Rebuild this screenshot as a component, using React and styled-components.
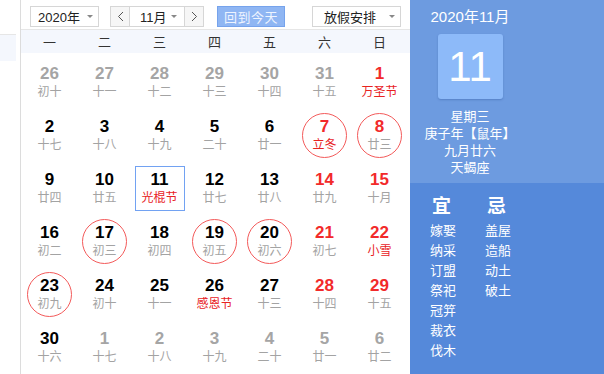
import styled, { createGlobalStyle } from "styled-components"

const GlobalStyle = createGlobalStyle`
    html, body {
        margin: 0;
        padding: 0;
        background: #fff;
    }
    body {
        font-family: "Liberation Sans", Arial, "Noto Sans CJK SC", sans-serif;
    }
`

const weekDays = ["一", "二", "三", "四", "五", "六", "日"]

// tone: d = normal, r = red (weekend), m = other month
const weeks = [
    [
        { n: 26, l: "初十", t: "m" },
        { n: 27, l: "十一", t: "m" },
        { n: 28, l: "十二", t: "m" },
        { n: 29, l: "十三", t: "m" },
        { n: 30, l: "十四", t: "m" },
        { n: 31, l: "十五", t: "m" },
        { n: 1, l: "万圣节", t: "r", fest: true },
    ],
    [
        { n: 2, l: "十七" },
        { n: 3, l: "十八" },
        { n: 4, l: "十九" },
        { n: 5, l: "二十" },
        { n: 6, l: "廿一" },
        { n: 7, l: "立冬", t: "r", fest: true, mark: true },
        { n: 8, l: "廿三", t: "r", mark: true },
    ],
    [
        { n: 9, l: "廿四" },
        { n: 10, l: "廿五" },
        { n: 11, l: "光棍节", fest: true, today: true },
        { n: 12, l: "廿七" },
        { n: 13, l: "廿八" },
        { n: 14, l: "廿九", t: "r" },
        { n: 15, l: "十月", t: "r" },
    ],
    [
        { n: 16, l: "初二" },
        { n: 17, l: "初三", mark: true },
        { n: 18, l: "初四" },
        { n: 19, l: "初五", mark: true },
        { n: 20, l: "初六", mark: true },
        { n: 21, l: "初七", t: "r" },
        { n: 22, l: "小雪", t: "r", fest: true },
    ],
    [
        { n: 23, l: "初九", mark: true },
        { n: 24, l: "初十" },
        { n: 25, l: "十一" },
        { n: 26, l: "感恩节", fest: true },
        { n: 27, l: "十三" },
        { n: 28, l: "十四", t: "r" },
        { n: 29, l: "十五", t: "r" },
    ],
    [
        { n: 30, l: "十六" },
        { n: 1, l: "十七", t: "m" },
        { n: 2, l: "十八", t: "m" },
        { n: 3, l: "十九", t: "m" },
        { n: 4, l: "二十", t: "m" },
        { n: 5, l: "廿一", t: "m" },
        { n: 6, l: "廿二", t: "m" },
    ],
]

const good = ["嫁娶", "纳采", "订盟", "祭祀", "冠笄", "裁衣", "伐木"]
const bad = ["盖屋", "造船", "动土", "破土"]

const Chevron = ({ dir }) => (
    <svg width="7" height="11" viewBox="0 0 7 11">
        <polyline
            points={dir === "left" ? "6,1 1.5,5.5 6,10" : "1,1 5.5,5.5 1,10"}
            fill="none"
            stroke="#555"
            strokeWidth="1"
        />
    </svg>
)

const App = () => {
    return (
        <>
            <GlobalStyle />
            <Page>
                <LeftStrip>
                    <StripTop />
                    <StripBand />
                </LeftStrip>
                <Main>
                    <Toolbar>
                        <Select $w={69}>
                            2020年
                            <Caret />
                        </Select>
                        <MonthGroup>
                            <StepButton>
                                <Chevron dir="left" />
                            </StepButton>
                            <MonthSelect>
                                11月
                                <Caret />
                            </MonthSelect>
                            <StepButton>
                                <Chevron dir="right" />
                            </StepButton>
                        </MonthGroup>
                        <TodayButton>回到今天</TodayButton>
                        <Select $w={89} $push>
                            放假安排
                            <Caret />
                        </Select>
                    </Toolbar>
                    <WeekHeader>
                        {weekDays.map((d) => (
                            <WeekDay key={d}>{d}</WeekDay>
                        ))}
                    </WeekHeader>
                    <Grid>
                        {weeks.flat().map((day, i) => (
                            <DayCell key={i}>
                                <DayBox $mark={day.mark} $today={day.today}>
                                    <DayNum $tone={day.t || "d"}>{day.n}</DayNum>
                                    <Lunar $red={day.fest}>{day.l}</Lunar>
                                </DayBox>
                            </DayCell>
                        ))}
                    </Grid>
                </Main>
                <Side>
                    <SideTop>
                        <SideColumn>
                            <MonthTitle>2020年11月</MonthTitle>
                            <BigDay>11</BigDay>
                            <InfoLines>
                                <span>星期三</span>
                                <span>庚子年【鼠年】</span>
                                <span>九月廿六</span>
                                <span>天蝎座</span>
                            </InfoLines>
                        </SideColumn>
                    </SideTop>
                    <SideBottom>
                        <Almanac>
                            <AlmanacCol $w={55}>
                                <AlmanacHead>宜</AlmanacHead>
                                {good.map((g) => (
                                    <AlmanacItem key={g}>{g}</AlmanacItem>
                                ))}
                            </AlmanacCol>
                            <AlmanacCol $w={40}>
                                <AlmanacHead>忌</AlmanacHead>
                                {bad.map((b) => (
                                    <AlmanacItem key={b}>{b}</AlmanacItem>
                                ))}
                            </AlmanacCol>
                        </Almanac>
                    </SideBottom>
                </Side>
            </Page>
        </>
    )
}

export default App

const Page = styled.div`
    width: 604px;
    height: 374px;
    display: flex;
    overflow: hidden;
    background: #fff;
`

const LeftStrip = styled.div`
    width: 20px;
    flex-shrink: 0;
    border-right: 1px solid #dcdcdc;
`

const StripTop = styled.div`
    width: 16px;
    height: 34px;
    border-bottom: 1px solid #e6e6e6;
`

const StripBand = styled.div`
    width: 16px;
    height: 26px;
    background: #f4f7fd;
`

const Main = styled.div`
    width: 389px;
    flex-shrink: 0;
    display: flex;
    flex-direction: column;
`

const Toolbar = styled.div`
    height: 34px;
    box-sizing: border-box;
    padding: 6px 9px 0 9px;
    display: flex;
    align-items: flex-start;
    border-bottom: 1px solid #e6e6e6;
`

const Select = styled.div`
    width: ${(p) => p.$w}px;
    height: 21px;
    box-sizing: border-box;
    border: 1px solid #d6d6d6;
    background: #fff;
    display: flex;
    align-items: center;
    justify-content: space-between;
    padding: 0 5px 0 ${(p) => (p.$push ? "11px" : "7px")};
    font-size: 13px;
    color: #222;
    margin-left: ${(p) => (p.$push ? "27px" : "0")};
`

const Caret = styled.span`
    width: 0;
    height: 0;
    border-left: 3px solid transparent;
    border-right: 3px solid transparent;
    border-top: 3px solid #888;
`

const MonthGroup = styled.div`
    display: flex;
    margin-left: 11px;
    height: 21px;
`

const StepButton = styled.div`
    width: 20px;
    height: 21px;
    box-sizing: border-box;
    border: 1px solid #d6d6d6;
    background: #f6f6f6;
    display: flex;
    align-items: center;
    justify-content: center;
`

const MonthSelect = styled.div`
    width: 54px;
    height: 21px;
    box-sizing: border-box;
    border-top: 1px solid #d6d6d6;
    border-bottom: 1px solid #d6d6d6;
    background: #fff;
    display: flex;
    align-items: center;
    justify-content: space-between;
    padding: 0 7px 0 10px;
    font-size: 13px;
    color: #222;
`

const TodayButton = styled.div`
    width: 68px;
    height: 21px;
    margin-left: 13px;
    box-sizing: border-box;
    border: 1px solid #76a3ec;
    background: #8fb6f3;
    color: #eef4ff;
    font-size: 13px;
    display: flex;
    align-items: center;
    justify-content: center;
    letter-spacing: 0.5px;
`

const WeekHeader = styled.div`
    height: 26px;
    background: #f4f7fd;
    display: grid;
    grid-template-columns: repeat(7, 55px);
    padding-left: 1px;
    align-items: center;
`

const WeekDay = styled.div`
    text-align: center;
    font-size: 13px;
    color: #333;
`

const Grid = styled.div`
    display: grid;
    grid-template-columns: repeat(7, 55px);
    grid-auto-rows: 53px;
    padding: 3px 0 0 1px;
`

const DayCell = styled.div`
    display: flex;
    align-items: center;
    justify-content: center;
`

const DayBox = styled.div`
    width: ${(p) => (p.$today ? "50px" : "45px")};
    height: 45px;
    box-sizing: border-box;
    display: flex;
    flex-direction: column;
    align-items: center;
    justify-content: center;
    border: 1px solid
        ${(p) => (p.$mark ? "#f35a5a" : p.$today ? "#72a2f2" : "transparent")};
    border-radius: ${(p) => (p.$mark ? "50%" : "0")};
    padding-bottom: 1px;
`

const toneColor = { d: "#000", r: "#f22a2a", m: "#a5a5a5" }

const DayNum = styled.div`
    font-size: 17px;
    line-height: 18px;
    font-weight: bold;
    color: ${(p) => toneColor[p.$tone]};
`

const Lunar = styled.div`
    font-size: 12px;
    line-height: 16px;
    margin-top: 1px;
    color: ${(p) => (p.$red ? "#e8231f" : "#a3a3a3")};
`

const Side = styled.div`
    flex: 1;
    display: flex;
    flex-direction: column;
`

const SideTop = styled.div`
    height: 183px;
    background: #6d9be0;
`

const SideColumn = styled.div`
    width: 120px;
    display: flex;
    flex-direction: column;
    align-items: center;
    color: #fff;
`

const MonthTitle = styled.div`
    font-size: 15px;
    line-height: 18px;
    margin-top: 8px;
`

const BigDay = styled.div`
    width: 65px;
    height: 65px;
    margin-top: 8px;
    border-radius: 3px;
    background: #8dbaf9;
    box-shadow: 0 1px 2px rgba(40, 80, 150, 0.35);
    font-size: 42px;
    display: flex;
    align-items: center;
    justify-content: center;
`

const InfoLines = styled.div`
    margin-top: 9px;
    display: flex;
    flex-direction: column;
    align-items: center;
    font-size: 13px;
    line-height: 17px;
`

const SideBottom = styled.div`
    flex: 1;
    background: #5589da;
`

const Almanac = styled.div`
    display: flex;
    padding: 12px 0 0 20px;
    color: #fff;
`

const AlmanacCol = styled.div`
    width: ${(p) => p.$w}px;
    display: flex;
    flex-direction: column;
`

const AlmanacHead = styled.div`
    font-size: 19px;
    font-weight: bold;
    line-height: 24px;
    padding-left: 2px;
    margin-bottom: 2px;
`

const AlmanacItem = styled.div`
    font-size: 13px;
    line-height: 20px;
`
